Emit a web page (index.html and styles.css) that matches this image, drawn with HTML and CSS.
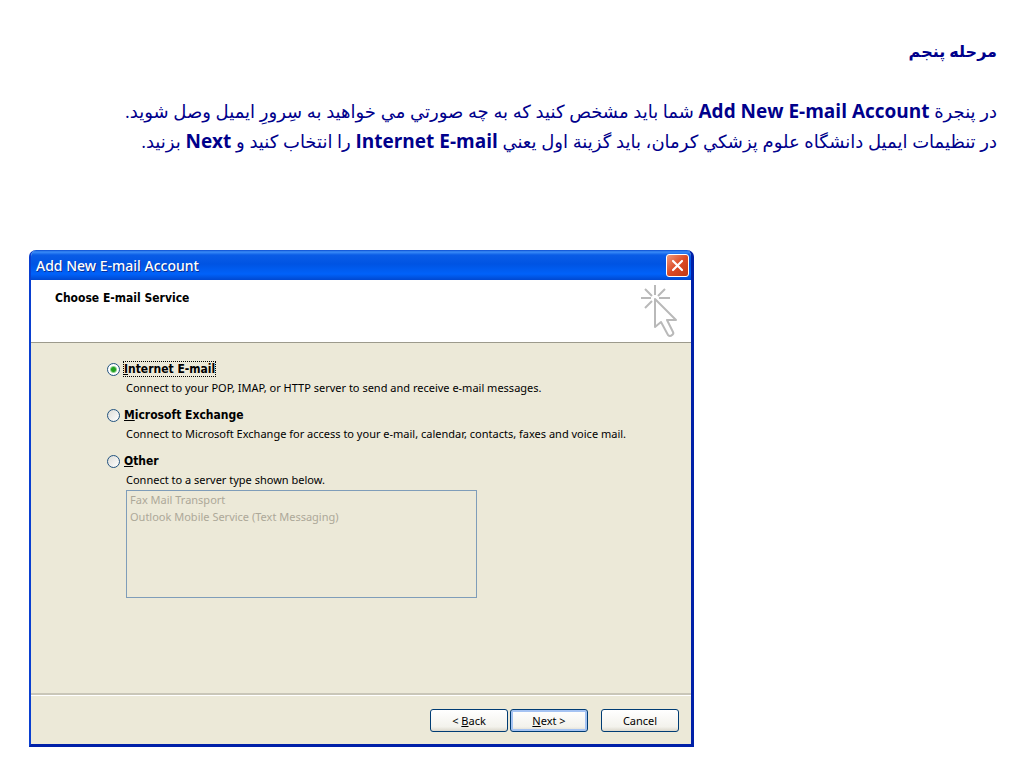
FILE: index.html
```html
<!DOCTYPE html>
<html lang="fa">
<head>
  <meta charset="UTF-8" />
  <meta name="viewport" content="width=device-width, initial-scale=1.0"/>
  <title>Add New E-mail Account</title>
  <link rel="stylesheet" href="styles.css">
</head>
<body>
  <main class="slide">
    <div class="intro" dir="rtl">
      <h1>مرحله پنجم</h1>
      <p>در پنجرة <b>Add New E-mail Account</b> شما بايد مشخص كنيد كه به چه صورتي مي خواهيد به سِرورِ ايميل وصل شويد.</p>
      <p>در تنظيمات ايميل دانشگاه علوم پزشكي كرمان، بايد گزينة اول يعني <b>Internet E-mail</b> را انتخاب كنيد و <b>Next</b> بزنيد.</p>
    </div>

    <form class="dialog" lang="en">
      <div class="titlebar">
        <h2>Add New E-mail Account</h2>
        <button type="button" class="close" aria-label="Close">
          <svg viewBox="0 0 19 19" width="19" height="19">
            <path d="M5 5 L14 14 M14 5 L5 14" stroke="#fff" stroke-width="2.2" stroke-linecap="round"/>
          </svg>
        </button>
      </div>

      <div class="header">
        <h3>Choose E-mail Service</h3>
        <svg class="cursor" viewBox="0 0 36 54" width="36" height="54" fill="none" stroke="#b9b9b9" stroke-width="2">
          <path d="M14 0v10 M0 13h10 M18 13h11 M4 4l7 7 M24 4l-7 7 M4 23l7-7"/>
          <path d="M14 14v28l6-5 7 13q2 2 4 0 2-1 1-3l-6-12h9z" stroke-linejoin="round"/>
        </svg>
      </div>

      <div class="content">
        <div class="option">
          <input type="radio" name="service" id="internet" checked>
          <label for="internet" class="focused"><u>I</u>nternet E-mail</label>
          <p>Connect to your POP, IMAP, or HTTP server to send and receive e-mail messages.</p>
        </div>
        <div class="option">
          <input type="radio" name="service" id="exchange">
          <label for="exchange"><u>M</u>icrosoft Exchange</label>
          <p>Connect to Microsoft Exchange for access to your e-mail, calendar, contacts, faxes and voice mail.</p>
        </div>
        <div class="option">
          <input type="radio" name="service" id="other">
          <label for="other"><u>O</u>ther</label>
          <p id="other-text">Connect to a server type shown below.</p>
          <select size="6" disabled aria-labelledby="other-text">
            <option>Fax Mail Transport</option>
            <option>Outlook Mobile Service (Text Messaging)</option>
          </select>
        </div>
      </div>

      <div class="footer">
        <button type="button">&lt; <u>B</u>ack</button>
        <button type="button" class="default"><u>N</u>ext &gt;</button>
        <button type="button" class="cancel">Cancel</button>
      </div>
    </form>
  </main>
</body>
</html>
```
FILE: styles.css
```css
* {
  box-sizing: border-box;
}

body {
  margin: 0;
  background: #fff;
}

h1, h2, h3, p {
  margin: 0;
}

.slide {
  padding: 36px 27px 20px 29px;
}

.intro {
  min-height: 214px;
  color: #00008b;
  font-family: "Open Sans", "DejaVu Sans", sans-serif;
  font-size: 18px;
  line-height: 30px;
}

.intro h1 {
  margin-bottom: 30px;
  font-size: 16px;
}

.intro b {
  font-size: 19px;
}

.dialog {
  width: 68.7%;
  border: 2px solid #0a3fd0;
  border-right: 3px solid #0020a8;
  border-bottom: 3px solid #0020a8;
  border-top: 0;
  border-radius: 7px 7px 0 0;
  background: #ece9d8;
  font-family: "Noto Sans", sans-serif;
  font-size: 11px;
  color: #000;
  overflow: hidden;
}

.titlebar {
  display: flex;
  align-items: center;
  justify-content: space-between;
  height: 30px;
  padding: 0 2px 0 5px;
  background: linear-gradient(#0a4bd0 0, #3a8cf8 2px, #0a5ce6 5px, #0054e3 14px, #0062fa 24px, #0048d0 30px);
}

.titlebar h2 {
  font-size: 14px;
  font-weight: 500;
  color: #fff;
  text-shadow: 1px 1px #0a2f94;
}

.close {
  display: flex;
  align-items: center;
  justify-content: center;
  width: 23px;
  height: 23px;
  padding: 0;
  border: 1px solid #fff;
  border-radius: 3px;
  background: linear-gradient(135deg, #ee9a7c, #dc4a25 50%, #c03a14);
}

.header {
  display: flex;
  justify-content: space-between;
  height: 63px;
  padding: 5px 14px 0 24px;
  background: #fff;
  border-bottom: 1px solid #9c9a8c;
}

.header h3 {
  padding-top: 5px;
  font-family: "DejaVu Sans Condensed", sans-serif;
  font-size: 12px;
  line-height: 16px;
}

.content {
  min-height: 352px;
  padding: 18px 16px 0 76px;
  border-bottom: 2px solid #c9c6b8;
}

.option {
  display: grid;
  grid-template-columns: 13px 1fr;
  column-gap: 3px;
  align-items: center;
  margin-bottom: 9px;
}

.option input {
  appearance: none;
  width: 13px;
  height: 13px;
  margin: 0;
  border: 1px solid #21527f;
  border-radius: 50%;
  background: linear-gradient(135deg, #dcdcd7, #fff);
}

.option input:checked {
  background: radial-gradient(circle, #21a121 0 2px, #fff 4px);
}

.option label {
  justify-self: start;
  border: 1px dotted transparent;
  font-family: "DejaVu Sans Condensed", sans-serif;
  font-size: 12px;
  font-weight: bold;
  line-height: 14px;
}

.option .focused {
  border-color: #000;
}

.option p {
  grid-column: 2;
  padding: 1px 0 0 3px;
  line-height: 20px;
}

.option select {
  grid-column: 2;
  justify-self: start;
  width: 62%;
  min-width: 351px;
  height: 108px;
  margin-left: 3px;
  padding: 1px 2px;
  border: 1px solid #7f9db9;
  border-radius: 0;
  background: #ece9d8;
  font: inherit;
  opacity: 1;
  overflow: hidden;
}

.option option {
  min-height: 17px;
  padding: 0 1px;
  line-height: 17px;
  color: #aca899;
}

.footer {
  display: flex;
  justify-content: flex-end;
  gap: 2px;
  padding: 13px 12px 12px;
  border-top: 1px solid #fff;
}

.footer button {
  width: 78px;
  height: 23px;
  padding: 0;
  border: 1px solid #003c74;
  border-radius: 3px;
  background: linear-gradient(#fff, #f3f2ec 80%, #dcd8cc);
  font: inherit;
  color: #000;
}

.footer .default {
  box-shadow: inset 0 0 0 2px #a5c3f2;
}

.footer .cancel {
  margin-left: 11px;
}
```
